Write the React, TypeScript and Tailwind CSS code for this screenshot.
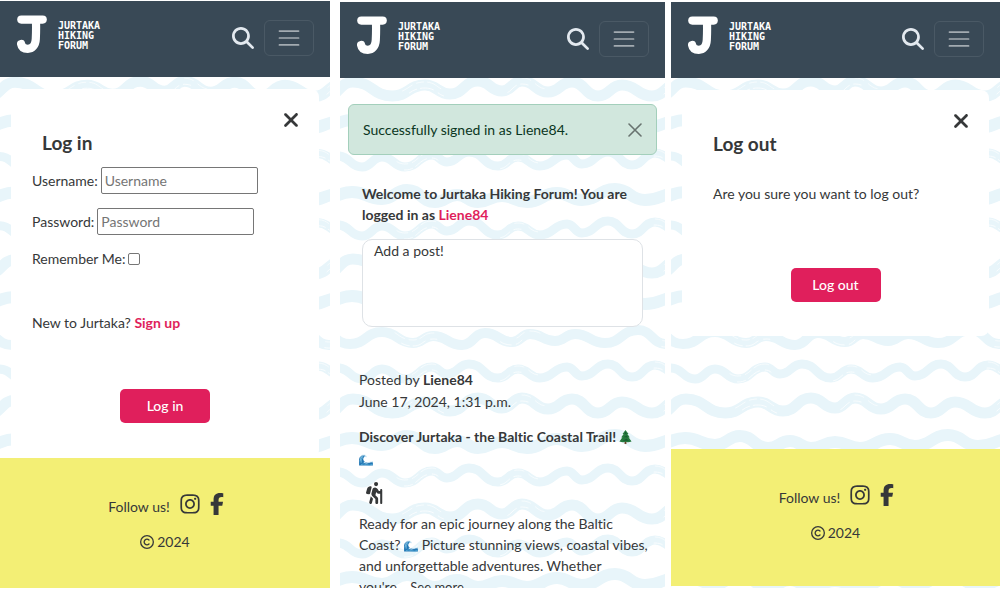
import type { ReactNode } from "react";
import {
  FaFacebookF,
  FaInstagram,
  FaMagnifyingGlass,
  FaPersonHiking,
  FaRegCopyright,
  FaXmark,
} from "react-icons/fa6";

type Point = [number, number];
type Row = { kind: "ripple" | "swell" | "roll" | "dip"; y: number };

const WAVES: Record<Row["kind"], { width: number; rough: boolean; points: Point[] }> = {
  ripple: {
    width: 9,
    rough: true,
    points: [[-16, -8], [0, -3], [24, 8], [44, -2], [67, 8], [94, -4], [109, 3], [131, -7], [160, 7], [180, -2], [202, 7], [229, -4], [244, 5], [270, -7], [294, 6], [317, -6], [340, 3]],
  },
  swell: {
    width: 11,
    rough: true,
    points: [[-12, 8], [15, -6], [54, 8], [87, -3], [112, 6], [140, -7], [164, 3], [184, -7], [210, 4], [234, -6], [260, 8], [284, -3], [314, 8], [340, -4]],
  },
  roll: {
    width: 12,
    rough: false,
    points: [[-16, 4], [14, -3], [44, 4], [69, -5], [97, 7], [119, 0], [140, 7], [164, 1], [189, 7], [219, -2], [244, 5], [277, -6], [307, 5], [340, -2]],
  },
  dip: {
    width: 10,
    rough: true,
    points: [[-20, -8], [12, 6], [44, -6], [75, 5], [95, -2], [124, 7], [147, -5], [174, 4], [192, -4], [217, 3], [237, -4], [267, 5], [300, -8], [328, 6], [345, 2]],
  },
};

const ROWS: Row[] = [
  { kind: "swell", y: 88 },
  { kind: "roll", y: 123 },
  { kind: "ripple", y: 159 },
  { kind: "roll", y: 195 },
  { kind: "ripple", y: 228 },
  { kind: "swell", y: 265 },
  { kind: "roll", y: 299 },
  { kind: "dip", y: 338 },
  { kind: "ripple", y: 371 },
  { kind: "swell", y: 405 },
  { kind: "roll", y: 441 },
  { kind: "ripple", y: 475 },
  { kind: "swell", y: 511 },
  { kind: "ripple", y: 546 },
  { kind: "roll", y: 580 },
];

function wavePath(points: Point[], y: number) {
  let d = `M${points[0][0]} ${points[0][1] + y}`;
  for (let i = 1; i < points.length; i++) {
    const [x0, y0] = points[i - 1];
    const [x1, y1] = points[i];
    const mid = (x0 + x1) / 2;
    d += `C${mid} ${y0 + y} ${mid} ${y1 + y} ${x1} ${y1 + y}`;
  }
  return d;
}

function Waves() {
  return (
    <svg
      className="absolute inset-0 -z-10 h-full w-full"
      viewBox="0 0 329 588"
      preserveAspectRatio="xMidYMin slice"
      fill="none"
      aria-hidden="true"
    >
      {ROWS.map(({ kind, y }) => {
        const wave = WAVES[kind];
        return (
          <g key={y}>
            <path d={wavePath(wave.points, y)} stroke="#e8f5fa" strokeWidth={wave.width} />
            {wave.rough && (
              <>
                <path d={wavePath(wave.points, y + 3)} stroke="#fff" strokeWidth="0.7" strokeDasharray="0 92 9 3 14 5 7 70 12 4 8 60" />
                <path d={wavePath(wave.points, y - 3)} stroke="#fff" strokeWidth="0.6" strokeDasharray="0 84 12 4 8 3 16 90 10 5 11 50" />
              </>
            )}
          </g>
        );
      })}
    </svg>
  );
}

function LogoMark() {
  return (
    <svg className="h-[38px] w-[30px]" viewBox="0 0 30 38" fill="none" stroke="#fff" strokeLinecap="round" strokeLinejoin="round" aria-hidden="true">
      <path d="M4.3 4.6H25.7" strokeWidth="8.2" />
      <path d="M19 6C19.2 13 19.1 18 18.8 24C18.5 30.500 15 33.800 10.800 33.800C7 33.800 4.600 32 4.100 29" strokeWidth="8.200" />
    </svg>
  );
}

function Header() {
  return (
    <header className="flex h-[76px] shrink-0 items-start justify-between bg-[#394956] pr-4 pl-[17px]">
      <a href="#home" className="flex gap-[11px] pt-[14px] text-white" aria-label="Jurtaka Hiking Forum">
        <LogoMark />
        <span className="flex flex-col pt-[6px] font-['DejaVu_Sans_Mono',monospace] text-[10px] leading-[10px] font-bold">
          <span>JURTAKA</span>
          <span>HIKING</span>
          <span>FORUM</span>
        </span>
      </a>
      <div className="flex items-center gap-[10px] pt-[19px]">
        <a href="#search" aria-label="Search" className="text-[#e3e9ef]">
          <FaMagnifyingGlass size={22} />
        </a>
        <button type="button" aria-label="Menu" className="flex h-9 w-[50px] items-center justify-center rounded-md border border-[#4a5965]">
          <svg className="size-[26px]" viewBox="0 0 30 30" stroke="#a3abb1" strokeWidth="2" strokeLinecap="round" aria-hidden="true">
            <path d="M4 7h22M4 15h22M4 23h22" />
          </svg>
        </button>
      </div>
    </header>
  );
}

function Footer() {
  return (
    <footer className="flex flex-1 flex-col items-center bg-[#f3ef75] pt-[35px]">
      <div className="flex items-end gap-[9px] pl-1.5">
        <span className="leading-4">Follow us!</span>
        <a href="#instagram" aria-label="Instagram">
          <FaInstagram size={22} />
        </a>
        <a href="#facebook" aria-label="Facebook" className="-ml-1">
          <FaFacebookF size={22} />
        </a>
      </div>
      <p className="mt-4 flex items-center gap-[3px]">
        <FaRegCopyright size={14} />
        2024
      </p>
    </footer>
  );
}

function Card({ title, children }: { title: string; children: ReactNode }) {
  return (
    <section className="mx-[11px] flex flex-col rounded-lg bg-white pt-5 pr-[17px] pl-[21px]">
      <a href="#close" aria-label="Close" className="self-end">
        <FaXmark size={22} />
      </a>
      <h1 className="pl-[10px] text-[19px] leading-6 font-bold">{title}</h1>
      {children}
    </section>
  );
}

function PinkButton({ children }: { children: ReactNode }) {
  return (
    <button type="submit" className="h-[34px] w-[90px] self-center rounded-[5px] bg-[#e01f5c] font-medium text-white">
      {children}
    </button>
  );
}

function LoginScreen() {
  return (
    <div className="relative isolate flex flex-[330] flex-col overflow-hidden pt-px">
      <Waves />
      <Header />
      <div className="h-3" />
      <Card title="Log in">
        <form className="mt-3 flex flex-col pb-[35px]">
          <div className="flex items-center gap-[3px]">
            <label htmlFor="username">Username:</label>
            <input id="username" type="text" placeholder="Username" className="h-[27px] w-[157px] rounded-xs border border-[#767676] bg-white px-[3px] placeholder:text-[#757575]" />
          </div>
          <div className="mt-[14px] flex items-center gap-[3px]">
            <label htmlFor="password">Password:</label>
            <input id="password" type="password" placeholder="Password" className="h-[27px] w-[157px] rounded-xs border border-[#767676] bg-white px-[3px] placeholder:text-[#757575]" />
          </div>
          <div className="mt-[13px] flex items-center gap-[3px]">
            <label htmlFor="remember">Remember Me:</label>
            <input id="remember" type="checkbox" className="size-3 appearance-none rounded-xs border border-[#767676] bg-white" />
          </div>
          <p className="mt-[42px]">
            New to Jurtaka?{" "}
            <a href="#signup" className="font-bold text-[#e01f5c]">Sign up</a>
          </p>
          <div className="mt-[55px] flex flex-col pr-1">
            <PinkButton>Log in</PinkButton>
          </div>
        </form>
      </Card>
      <Footer />
    </div>
  );
}

function TreeIcon() {
  return (
    <svg className="inline-block h-[14px] w-[13px] align-[-2px]" viewBox="0 0 14 15" role="img" aria-label="Evergreen tree">
      <path d="M6 11h2v4H6z" fill="#6b4226" />
      <path d="M7 0L10.200 4.300L9 4.200L11.700 8L10.300 7.900L13.500 12.300Q10 13.500 7 12.700Q4 13.500 .5 12.300L3.700 7.900L2.300 8L5 4.200L3.800 4.300Z" fill="#257a3e" />
      <path d="M7 1.500L8.500 4.500L6 4.100ZM5 7.500L8.500 6L9.500 8ZM4 11.500L8 9.500L11 11.500Z" fill="#165b32" />
    </svg>
  );
}

function SeaIcon() {
  return (
    <svg className="inline-block h-3 w-[14px] align-[-2px]" viewBox="0 0 15 13" role="img" aria-label="Water wave">
      <path d="M0 12.500V6Q.5 1.800 4.500 1.200Q7 1 8 3.200Q6.500 2.300 5.200 3.400Q3.600 5.200 5.200 7.600Q7 9.800 10 9.100L15 8.300V12.500Z" fill="#2478b5" />
      <path d="M1 8Q1 3.500 4.600 2.300M2.200 9.500Q1.600 6 3.800 3.800" stroke="#7fc4e4" strokeWidth=".9" fill="none" />
      <path d="M1.200 3.500Q3.200 .3 6.200 1Q8 1.500 8 3.300Q6.600 2.200 5.600 3.200M5 9Q8 10.600 10.500 9.200T15 8.800" stroke="#d9eff8" strokeWidth="1" fill="none" />
      <path d="M2 11.500Q5 10 8 11.500T15 11" stroke="#5bb1da" strokeWidth=".8" fill="none" />
    </svg>
  );
}

function FeedScreen() {
  return (
    <div className="relative isolate ml-[10px] flex flex-[325] flex-col overflow-hidden pt-0.5">
      <Waves />
      <Header />
      <div role="alert" className="mx-2 mt-[26px] flex h-[51px] shrink-0 items-center justify-between rounded-md border border-[#a3cfbb] bg-[#d1e7dd] pr-[14px] pl-[14px] text-[#0a3622]">
        Successfully signed in as Liene84.
        <button type="button" aria-label="Dismiss">
          <svg className="size-[14px]" viewBox="0 0 14 14" stroke="#68736f" strokeWidth="1.600" strokeLinecap="round" aria-hidden="true">
            <path d="M1 1l12 12M13 1L1 13" />
          </svg>
        </button>
      </div>
      <div className="mt-7 px-[22px]">
        <h1 className="leading-[21px] font-bold">
          Welcome to Jurtaka Hiking Forum! You are logged in as <span className="text-[#e01f5c]">Liene84</span>
        </h1>
        <textarea
          aria-label="New post"
          placeholder="Add a post!"
          className="mt-[14px] block h-[88px] w-full resize-none rounded-[10px] border border-[#dee2e6] bg-white px-[11px] placeholder:text-[#363839]"
        />
      </div>
      <article className="mt-[42px] pr-[14px] pl-[19px]">
        <p>
          Posted by <strong>Liene84</strong>
        </p>
        <p>June 17, 2024, 1:31 p.m.</p>
        <h2 className="mt-[13px] pr-3 font-bold">
          Discover Jurtaka - the Baltic Coastal Trail! <TreeIcon /> <SeaIcon />
        </h2>
        <FaPersonHiking size={22} className="mt-3 ml-1" />
        <p className="mt-[9px] leading-[21px]">
          Ready for an epic journey along the Baltic Coast? <SeaIcon /> Picture stunning views, coastal vibes, and unforgettable adventures. Whether you're...{" "}
          <a href="#more" className="text-[13px]">See more</a>
        </p>
      </article>
    </div>
  );
}

function LogoutScreen() {
  return (
    <div className="relative isolate ml-1.5 flex flex-[329] flex-col overflow-hidden pt-0.5 pb-0.5">
      <Waves />
      <Header />
      <div className="h-3" />
      <Card title="Log out">
        <form className="flex flex-col pb-[34px]">
          <p className="mt-[27px] pl-[10px]">Are you sure you want to log out?</p>
          <div className="mt-[63px] flex flex-col pr-1">
            <PinkButton>Log out</PinkButton>
          </div>
        </form>
      </Card>
      <div className="h-[113px]" />
      <Footer />
    </div>
  );
}

export default function App() {
  return (
    <main className="flex h-screen overflow-hidden bg-white pb-px font-[Lato,sans-serif] text-[14px] leading-[22px] text-[#363839] [font-variant-ligatures:none]">
      <LoginScreen />
      <FeedScreen />
      <LogoutScreen />
    </main>
  );
}
